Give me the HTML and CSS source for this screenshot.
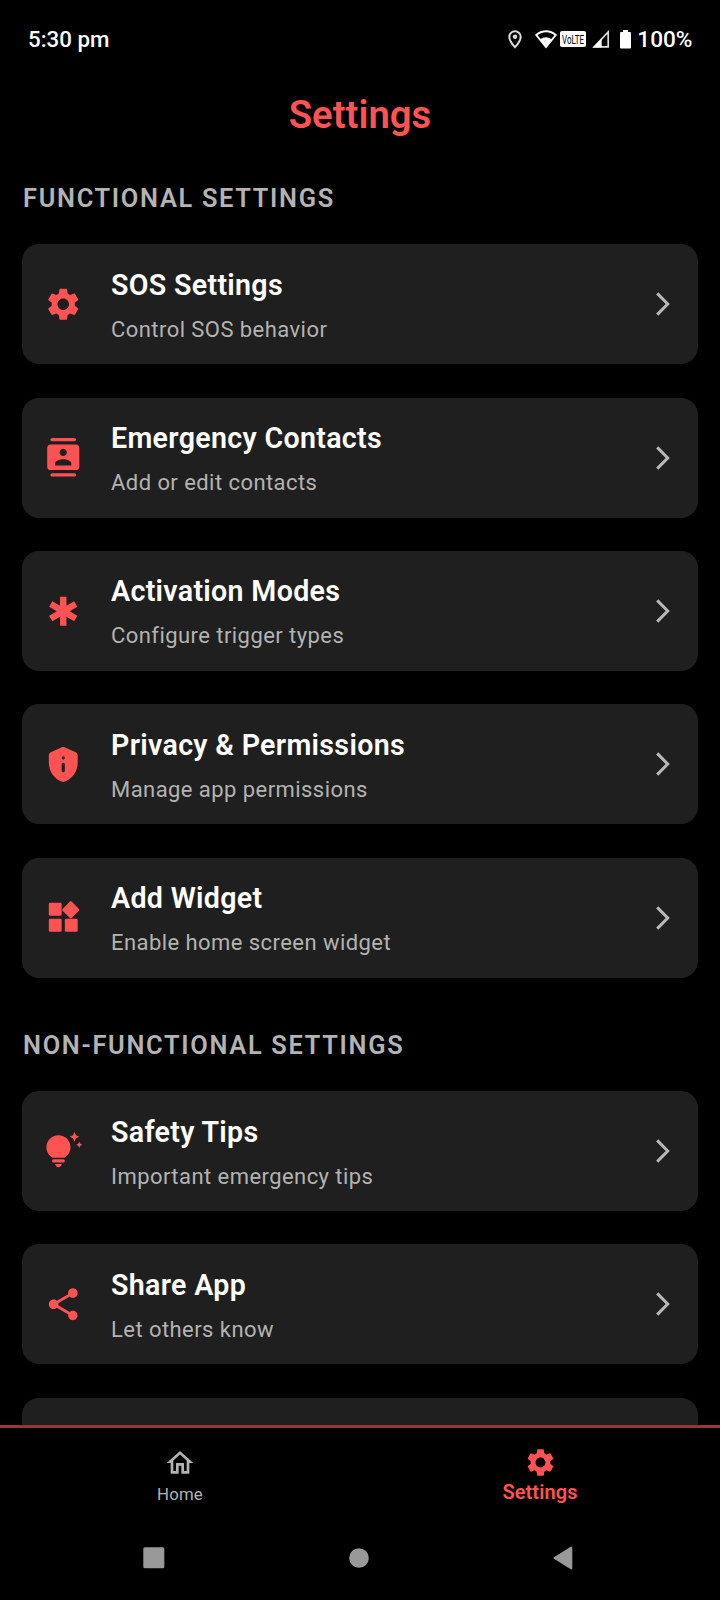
FILE: index.html
```html
<!DOCTYPE html>
<html lang="en">
<head>
<meta charset="utf-8">
<title>Settings</title>
<link rel="stylesheet" href="styles.css">
</head>
<body>
<svg class="defs" aria-hidden="true">
  <symbol id="gear" viewBox="0 0 24 24"><path d="M19.14 12.94c.04-.3.06-.61.06-.94 0-.32-.02-.64-.07-.94l2.03-1.58c.18-.14.23-.41.12-.61l-1.92-3.32c-.12-.22-.37-.29-.59-.22l-2.39.96c-.5-.38-1.03-.7-1.62-.94l-.36-2.54c-.04-.24-.24-.41-.48-.41h-3.84c-.24 0-.43.17-.47.41l-.36 2.54c-.59.24-1.13.57-1.62.94l-2.39-.96c-.22-.08-.47 0-.59.22L2.74 8.87c-.12.21-.08.47.12.61l2.03 1.58c-.05.3-.09.63-.09.94s.02.64.07.94l-2.03 1.58c-.18.14-.23.41-.12.61l1.92 3.32c.12.22.37.29.59.22l2.39-.96c.5.38 1.03.7 1.62.94l.36 2.54c.05.24.24.41.48.41h3.84c.24 0 .44-.17.47-.41l.36-2.54c.59-.24 1.13-.56 1.62-.94l2.39.96c.22.08.47 0 .59-.22l1.92-3.32c.12-.22.07-.47-.12-.61l-2.01-1.58zM12 15.6c-1.98 0-3.6-1.62-3.6-3.6s1.62-3.6 3.6-3.6 3.6 1.62 3.6 3.6-1.62 3.6-3.6 3.6z"/></symbol>
  <symbol id="chevron" viewBox="0 0 14 24"><path d="M1.2 1.400L11.700 12 1.200 22.600" fill="none" stroke="currentColor" stroke-width="3"/></symbol>
</svg>
<div class="screen">
  <header class="status">
    <span class="clock">5:30 pm</span>
    <div class="indicators">
      <svg class="pin" width="14" height="19" viewBox="0 0 14 19"><path d="M7 1.2C3.8 1.2 1.3 3.7 1.3 6.9 1.3 10.8 7 17.2 7 17.2s5.7-6.4 5.7-10.3C12.7 3.7 10.2 1.2 7 1.2z" fill="none" stroke="#ddd" stroke-width="2"/><circle cx="7" cy="6.8" r="2.2" fill="#ddd"/></svg>
      <svg class="wifi" width="22" height="19" viewBox="0 0 22 19"><path d="M1.3 5C6.7 0 15.300 0 20.700 5L11 17z" fill="none" stroke="#fff" stroke-width="1.800"/><path d="M5.200 9.400c3.400-2.900 8.200-2.900 11.600 0L11 17.400z" fill="#fff"/></svg>
      <span class="volte"><svg width="26" height="16" viewBox="0 0 26 16"><text x="2" y="12.500" textLength="22" lengthAdjust="spacingAndGlyphs">VoLTE</text></svg></span>
      <svg class="signal" width="18" height="18" viewBox="0 0 18 18"><path d="M16.200 2v14.900H2.200z" fill="none" stroke="#ddd" stroke-width="1.700"/><path d="M9.700 8.200V17.500H.8z" fill="#fff"/></svg>
      <svg class="battery" width="11" height="19" viewBox="0 0 11 19"><path d="M3 0h5v2h2q1 0 1 1v14.500q0 1-1 1H1q-1 0-1-1V3q0-1 1-1h2z" fill="#fff"/></svg>
      <span class="percent">100%</span>
    </div>
  </header>

  <h1 class="title">Settings</h1>

  <main class="content">
    <h2 class="section">FUNCTIONAL SETTINGS</h2>
    <div class="list">
      <div class="card">
        <svg class="icon"><use href="#gear"/></svg>
        <div class="copy"><div class="name">SOS Settings</div><div class="desc">Control SOS behavior</div></div>
        <svg class="chevron"><use href="#chevron"/></svg>
      </div>
      <div class="card">
        <svg class="icon" viewBox="0 0 24 24"><path fill-rule="evenodd" d="M5 0h14c.55 0 1 .45 1 1s-.45 1-1 1H5c-.55 0-1-.45-1-1s.45-1 1-1zM5 22h14c.55 0 1 .45 1 1s-.45 1-1 1H5c-.55 0-1-.45-1-1s.45-1 1-1zM20 4H4c-1.100 0-2 .9-2 2v12c0 1.100.9 2 2 2h16c1.100 0 2-.9 2-2V6c0-1.100-.9-2-2-2zm-8 2.750c1.240 0 2.250 1.010 2.250 2.250S13.240 11.250 12 11.250 9.750 10.240 9.750 9 10.760 6.750 12 6.750zM17 17.200H7v-1.500c0-1.670 3.330-2.500 5-2.500s5 .83 5 2.500v1.500z"/></svg>
        <div class="copy"><div class="name">Emergency Contacts</div><div class="desc">Add or edit contacts</div></div>
        <svg class="chevron"><use href="#chevron"/></svg>
      </div>
      <div class="card">
        <svg class="icon" viewBox="0 0 24 24"><path d="M20.790 9.230l-2-3.460L14 8.540V3h-4v5.540L5.210 5.770l-2 3.460L8 12l-4.790 2.770 2 3.460L10 15.460V21h4v-5.540l4.790 2.770 2-3.460L16 12z"/></svg>
        <div class="copy"><div class="name">Activation Modes</div><div class="desc">Configure trigger types</div></div>
        <svg class="chevron"><use href="#chevron"/></svg>
      </div>
      <div class="card">
        <svg class="icon" viewBox="0 0 24 24"><path fill-rule="evenodd" d="M11.190 1.360l-7 3.110C3.470 4.790 3 5.510 3 6.300V11c0 5.550 3.840 10.740 9 12 5.160-1.260 9-6.450 9-12V6.300c0-.79-.47-1.510-1.190-1.830l-7-3.110c-.51-.23-1.110-.23-1.620 0zM12 7c.55 0 1 .45 1 1s-.45 1-1 1-1-.45-1-1 .45-1 1-1zm0 4c.55 0 1 .45 1 1v4c0 .55-.45 1-1 1s-1-.45-1-1v-4c0-.55.45-1 1-1z"/></svg>
        <div class="copy"><div class="name">Privacy &amp; Permissions</div><div class="desc">Manage app permissions</div></div>
        <svg class="chevron"><use href="#chevron"/></svg>
      </div>
      <div class="card">
        <svg class="icon" viewBox="0 0 24 24"><rect x="3" y="3" width="8" height="8" rx=".8"/><rect x="3" y="13" width="8" height="8" rx=".8"/><rect x="13" y="13" width="8" height="8" rx=".8"/><rect x="12.700" y="3.350" width="8" height="8" rx=".8" transform="rotate(45 16.700 7.350)"/></svg>
        <div class="copy"><div class="name">Add Widget</div><div class="desc">Enable home screen widget</div></div>
        <svg class="chevron"><use href="#chevron"/></svg>
      </div>
    </div>

    <h2 class="section second">NON-FUNCTIONAL SETTINGS</h2>
    <div class="list">
      <div class="card">
        <svg class="icon" viewBox="0 0 24 24"><path d="M7 20h4c0 1.100-.9 2-2 2s-2-.9-2-2zm-1-1h6c.55 0 1-.45 1-1s-.45-1-1-1H6c-.55 0-1 .45-1 1s.45 1 1 1zm10.500-9.500c0 3.820-2.660 5.860-3.770 6.500H5.270c-1.110-.64-3.770-2.680-3.770-6.500C1.500 5.360 4.860 2 9 2s7.500 3.360 7.500 7.500zm4.870-2.130L20 8l1.370.63L22 10l.63-1.370L24 8l-1.370-.63L22 6l-.63 1.370zM19 6l.94-2.060L22 3l-2.060-.94L19 0l-.94 2.060L16 3l2.060.94L19 6z"/></svg>
        <div class="copy"><div class="name">Safety Tips</div><div class="desc">Important emergency tips</div></div>
        <svg class="chevron"><use href="#chevron"/></svg>
      </div>
      <div class="card">
        <svg class="icon" viewBox="0 0 24 24"><path d="M18 16.080c-.76 0-1.440.3-1.960.77L8.910 12.700c.05-.23.09-.46.09-.7s-.04-.47-.09-.7l7.050-4.110c.54.5 1.250.81 2.040.81 1.660 0 3-1.340 3-3s-1.340-3-3-3-3 1.340-3 3c0 .24.04.47.09.7L8.040 9.810C7.500 9.310 6.790 9 6 9c-1.660 0-3 1.340-3 3s1.340 3 3 3c.79 0 1.500-.31 2.040-.81l7.120 4.160c-.05.21-.08.43-.08.65 0 1.610 1.310 2.920 2.920 2.920s2.920-1.310 2.920-2.920-1.310-2.920-2.920-2.920z"/></svg>
        <div class="copy"><div class="name">Share App</div><div class="desc">Let others know</div></div>
        <svg class="chevron"><use href="#chevron"/></svg>
      </div>
      <div class="card"></div>
    </div>
  </main>

  <nav class="tabs">
    <div class="tab">
      <svg class="home" viewBox="0 0 24 24"><path d="M12 5.690l5 4.500V18h-2v-6H9v6H7v-7.810l5-4.500M12 3L2 12h3v8h6v-6h2v6h6v-8h3L12 3z"/></svg>
      <span>Home</span>
    </div>
    <div class="tab active">
      <svg class="cog"><use href="#gear"/></svg>
      <span>Settings</span>
    </div>
  </nav>

  <footer class="system">
    <svg width="22" height="22" viewBox="0 0 22 22"><rect x=".3" y=".3" width="21" height="21" rx="1.500"/></svg>
    <svg width="20" height="20" viewBox="0 0 20 20"><circle cx="10" cy="10" r="9.800"/></svg>
    <svg width="20" height="24" viewBox="0 0 20 24"><path d="M18.300 1.500v21L1.500 12z" stroke="#999" stroke-width="2" stroke-linejoin="round"/></svg>
  </footer>
</div>
</body>
</html>
```
FILE: styles.css
```css
* { box-sizing: border-box; }

body {
  margin: 0;
  background: #000;
  font-family: Roboto, sans-serif;
}

.defs { position: absolute; width: 0; height: 0; }

.screen {
  width: 720px;
  height: 1600px;
  display: flex;
  flex-direction: column;
  overflow: hidden;
}

svg { display: block; flex: none; }

.status {
  height: 78px;
  padding: 0 27.500px 0 28px;
  display: flex;
  align-items: center;
  justify-content: space-between;
  color: #fff;
  font-size: 22.300px;
  font-weight: 500;
}

.indicators { display: flex; align-items: center; }
.pin { margin-right: 12.500px; }
.wifi { margin-right: 3.500px; }
.volte { width: 26px; height: 16px; border-radius: 2px; background: #fff; margin-right: 6px; }
.volte svg { overflow: visible; }
.volte text { font-size: 13px; line-height: 14px; font-weight: 400; fill: #000; }
.signal { margin-right: 10px; }
.battery { margin-right: 6px; }
.percent { font-size: 22.600px; }

.title {
  height: 73px;
  margin: 0;
  line-height: 74px;
  text-align: center;
  color: #ff5252;
  font-size: 38.300px;
  font-weight: 600;
}

.content {
  height: 1273.600px;
  flex: none;
  padding: 0 22px;
  overflow: hidden;
}

.section {
  height: 93.300px;
  margin: 0;
  padding: 32px 0 0 1px;
  line-height: 31px;
  color: #b3b3b3;
  font-size: 25.400px;
  font-weight: 600;
  letter-spacing: 1.680px;
}

.second { height: 113.500px; padding-top: 52.500px; }

.list { display: flex; flex-direction: column; gap: 33.330px; }

.card {
  height: 120px;
  flex: none;
  display: flex;
  align-items: center;
  padding: 0 28.500px 0 22px;
  border-radius: 17px;
  background: #1f1f1f;
}

.icon { width: 38.500px; height: 38.500px; margin-left: -.1px; fill: #ff5252; }

.copy { flex: 1; padding: 9px 0 0 28.600px; }

.name {
  height: 40px;
  line-height: 40px;
  color: #fff;
  font-size: 28.600px;
  font-weight: 600;
  letter-spacing: .320px;
}

.desc {
  height: 48px;
  line-height: 50px;
  color: #b3b3b3;
  font-size: 22px;
  letter-spacing: .44px;
}

.chevron { width: 14px; height: 24px; color: #b8b8b8; }

.tabs {
  height: 92px;
  flex: none;
  display: flex;
  border-top: 3px solid #963838;
}

.tab {
  flex: 1;
  display: flex;
  flex-direction: column;
  align-items: center;
  color: #b3b3b3;
  font-size: 16.800px;
  letter-spacing: .2px;
}

.home { width: 32px; height: 32px; margin-top: 19px; fill: #b3b3b3; }
.cog { width: 33px; height: 33px; margin-top: 18px; fill: #ff5252; }
.tab span { line-height: 20px; margin-top: 5px; }
.active { color: #ff5252; font-size: 20px; font-weight: 600; letter-spacing: .1px; }
.active span { margin-top: 3px; }

.system {
  flex: 1;
  display: flex;
  align-items: center;
  justify-content: space-between;
  padding: 0 147px 0 143px;
  fill: #999;
}
```
